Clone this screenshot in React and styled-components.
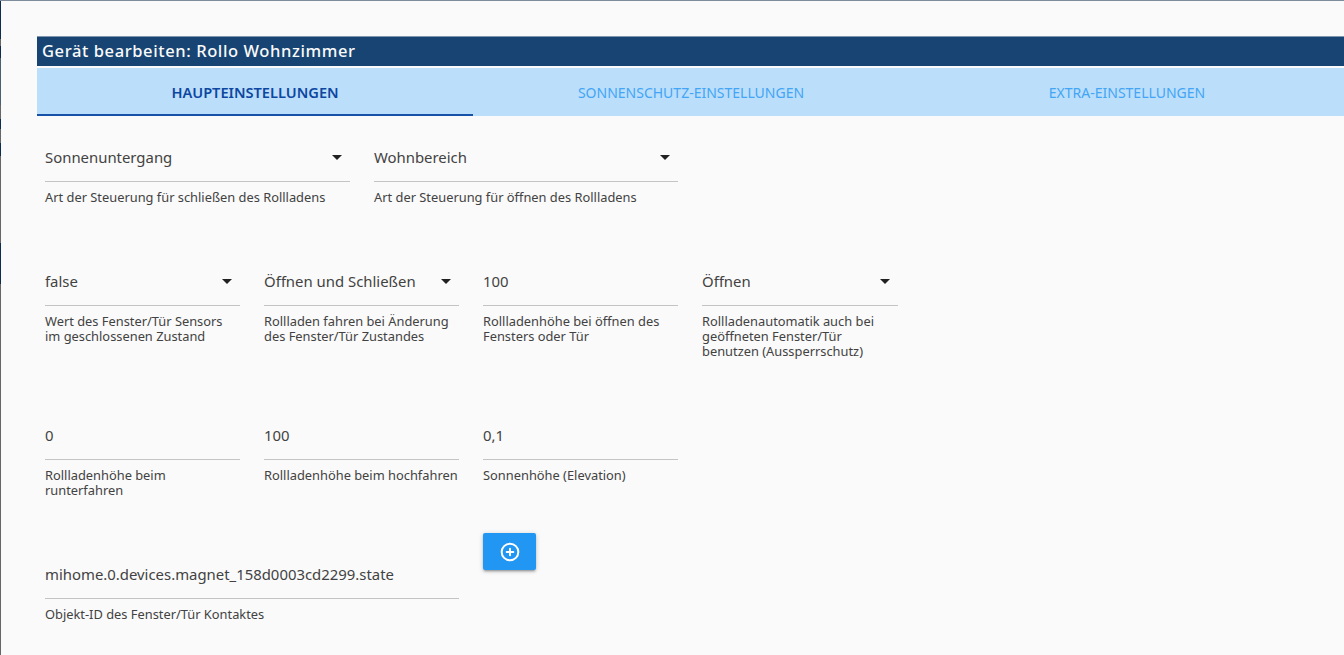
import React from "react";
import styled, { createGlobalStyle } from "styled-components";
import { CirclePlus } from "lucide-react";

const GlobalStyle = createGlobalStyle`
  html, body {
    margin: 0;
    height: 100%;
    overflow: hidden;
    background: #fafafa;
    font-family: "Noto Sans", "Open Sans", sans-serif;
  }
`;

const Page = styled.div`
  width: 1344px;
  height: 655px;
  box-sizing: border-box;
  padding: 35px 0 0 37px;
  border-top: 1px solid #7f8c9c;
  overflow: hidden;
  /* dark strip of the window behind, left edge */
  background: linear-gradient(
      to bottom,
      #0d2c50 0 38px,
      #666 38px 45px,
      #0d2c50 45px 57px,
      #4a6070 57px 104px,
      #666 104px 118px,
      #0d2c50 118px 128px,
      #666 128px 142px,
      #0d2c50 142px 155px,
      #666 155px 242px,
      #0d2c50 242px 283px,
      #666 283px 100%
    )
    0 0 / 1px 100% no-repeat;
`;

const TitleBar = styled.div`
  height: 30px;
  box-sizing: border-box;
  border-top: 1px solid #7e96ae;
  background: #174472;
  color: #fafafa;
  font-size: 16.5px;
  font-weight: 500;
  line-height: 28px;
  letter-spacing: 0.6px;
  padding-left: 5px;
`;

const Tabs = styled.div`
  display: flex;
  margin-top: 2px;
  height: 48px;
  background: #bbdefb;
`;

const Tab = styled.div`
  flex: 0 0 436px;
  box-sizing: border-box;
  text-align: center;
  line-height: ${({ $active }) => ($active ? "48px" : "50px")};
  font-size: ${({ $active }) => ($active ? "14.6px" : "14px")};
  font-weight: ${({ $active }) => ($active ? 600 : 400)};
  color: ${({ $active }) => ($active ? "#0d47a1" : "#42a5f5")};
  border-bottom: 2px solid ${({ $active }) => ($active ? "#1552a8" : "transparent")};
`;

const Row = styled.div`
  display: flex;
  padding-left: 8px;
  margin-bottom: 35px;
`;

const Field = styled.div`
  flex: 0 0 ${({ $width }) => $width}px;
  margin-right: 24px;
  padding-top: 29px;
`;

const Control = styled.div`
  display: flex;
  align-items: center;
  justify-content: space-between;
  height: 24px;
  padding-bottom: 12px;
  border-bottom: 1px solid #c4c4c4;
  color: #424242;
  font-size: 14.9px;
  line-height: 23px;
`;

const Caret = styled.span`
  width: 0;
  height: 0;
  margin-right: 8px;
  border-left: 5px solid transparent;
  border-right: 5px solid transparent;
  border-top: 5px solid #212121;
`;

const Help = styled.div`
  margin-top: 8px;
  color: #424242;
  font-size: 12.85px;
  line-height: 15px;
`;

const AddCell = styled.div`
  flex: 0 0 53px;
`;

const AddButton = styled.button`
  display: flex;
  align-items: center;
  justify-content: center;
  width: 53px;
  height: 37px;
  padding: 0;
  border: 0;
  border-radius: 2px;
  background: #2196f3;
  color: #fff;
  box-shadow: 0 2px 2px rgba(0, 0, 0, 0.14), 0 3px 1px -2px rgba(0, 0, 0, 0.12), 0 1px 5px rgba(0, 0, 0, 0.2);
`;

const SelectField = ({ width, value, help }) => (
  <Field $width={width}>
    <Control>
      {value}
      <Caret />
    </Control>
    <Help>{help}</Help>
  </Field>
);

const InputField = ({ width, value, help }) => (
  <Field $width={width}>
    <Control>{value}</Control>
    <Help>{help}</Help>
  </Field>
);

export default function App() {
  return (
    <Page>
      <GlobalStyle />
      <TitleBar>Gerät bearbeiten: Rollo Wohnzimmer</TitleBar>
      <Tabs>
        <Tab $active>HAUPTEINSTELLUNGEN</Tab>
        <Tab>SONNENSCHUTZ-EINSTELLUNGEN</Tab>
        <Tab>EXTRA-EINSTELLUNGEN</Tab>
      </Tabs>

      <Row>
        <SelectField width={305} value="Sonnenuntergang" help="Art der Steuerung für schließen des Rollladens" />
        <SelectField width={304} value="Wohnbereich" help="Art der Steuerung für öffnen des Rollladens" />
      </Row>
      <Row>
        <SelectField width={195} value="false" help="Wert des Fenster/Tür Sensors im geschlossenen Zustand" />
        <SelectField width={195} value="Öffnen und Schließen" help="Rollladen fahren bei Änderung des Fenster/Tür Zustandes" />
        <InputField width={195} value="100" help="Rollladenhöhe bei öffnen des Fensters oder Tür" />
        <SelectField width={196} value="Öffnen" help="Rollladenautomatik auch bei geöffneten Fenster/Tür benutzen (Aussperrschutz)" />
      </Row>
      <Row>
        <InputField width={195} value="0" help="Rollladenhöhe beim runterfahren" />
        <InputField width={195} value="100" help="Rollladenhöhe beim hochfahren" />
        <InputField width={195} value="0,1" help="Sonnenhöhe (Elevation)" />
      </Row>
      <Row>
        <InputField width={414} value="mihome.0.devices.magnet_158d0003cd2299.state" help="Objekt-ID des Fenster/Tür Kontaktes" />
        <AddCell>
          <AddButton aria-label="Hinzufügen">
            <CirclePlus size={20} strokeWidth={2.4} />
          </AddButton>
        </AddCell>
      </Row>
    </Page>
  );
}
